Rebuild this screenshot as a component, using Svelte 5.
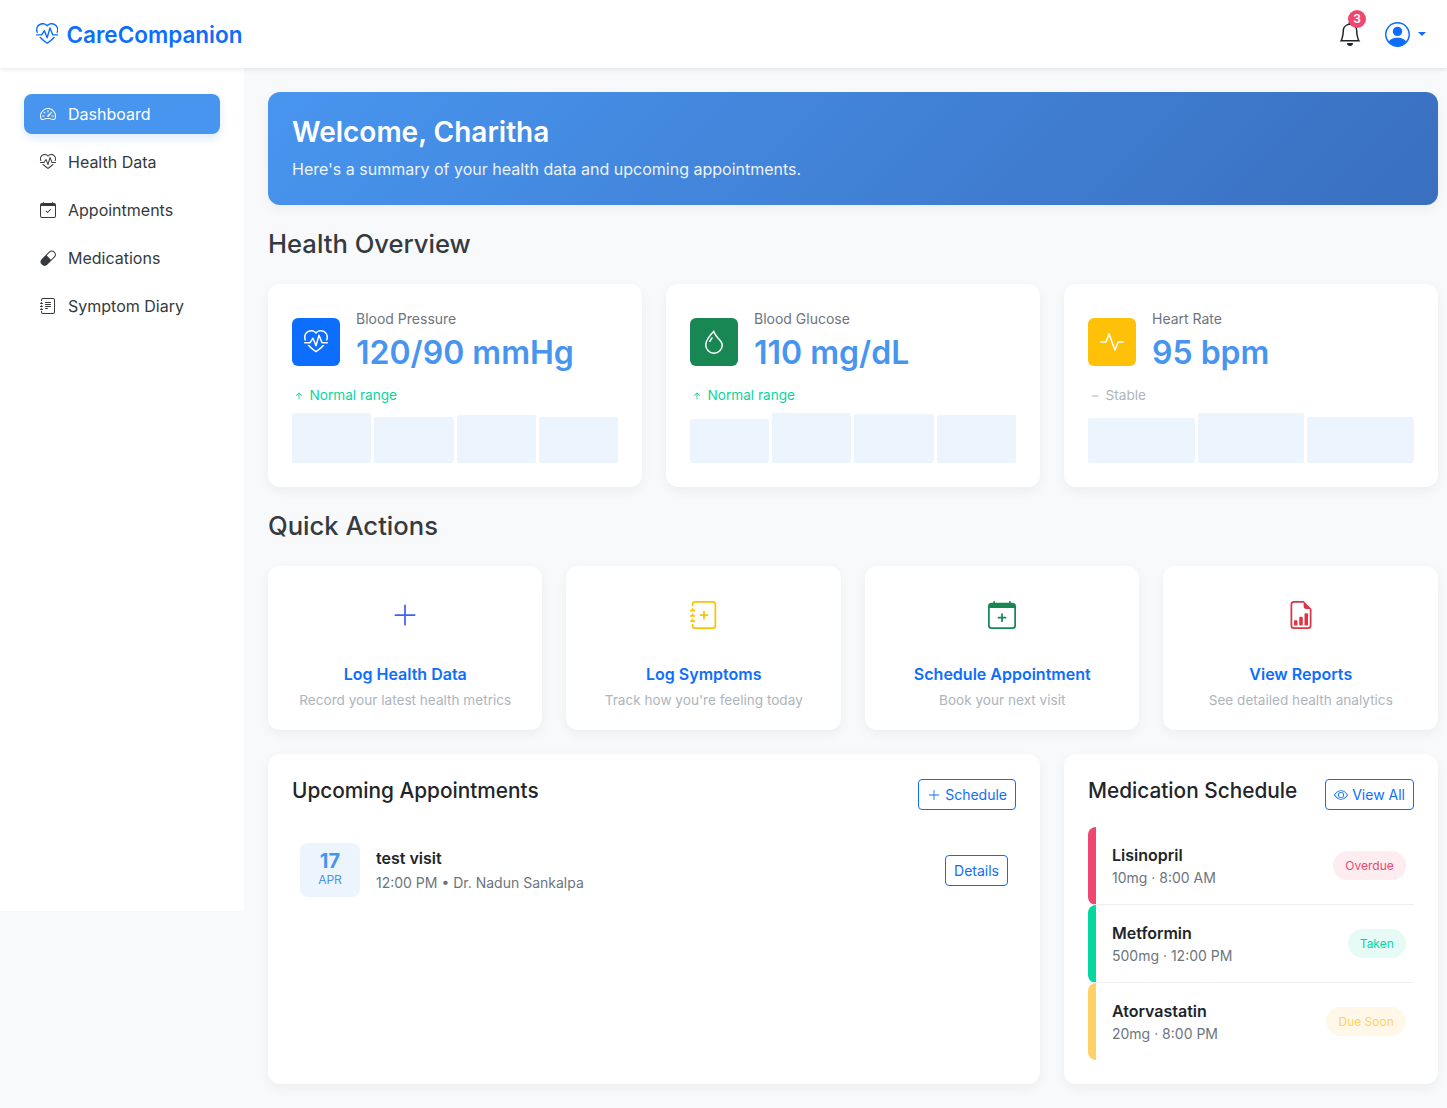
<script>
  const journalRings = "M3 0h10a2 2 0 0 1 2 2v12a2 2 0 0 1-2 2H3a2 2 0 0 1-2-2v-1h1v1a1 1 0 0 0 1 1h10a1 1 0 0 0 1-1V2a1 1 0 0 0-1-1H3a1 1 0 0 0-1 1v1H1V2a2 2 0 0 1 2-2M1 5v-.5a.5.5 0 0 1 1 0V5h.5a.5.5 0 0 1 0 1h-2a.5.5 0 0 1 0-1zm0 3v-.5a.5.5 0 0 1 1 0V8h.5a.5.5 0 0 1 0 1h-2a.5.5 0 0 1 0-1zm0 3v-.5a.5.5 0 0 1 1 0v.5h.5a.5.5 0 0 1 0 1h-2a.5.5 0 0 1 0-1z";
  const calendar = "M3.5 0a.5.5 0 0 1 .5.5V1h8V.5a.5.5 0 0 1 1 0V1h1a2 2 0 0 1 2 2v11a2 2 0 0 1-2 2H2a2 2 0 0 1-2-2V3a2 2 0 0 1 2-2h1V.5a.5.5 0 0 1 .5-.5M1 4v10a1 1 0 0 0 1 1h12a1 1 0 0 0 1-1V4z";

  const icons = {
    heartPulse: ["m8 2.748-.717-.737C5.6.281 2.514.878 1.4 3.053.918 3.995.78 5.323 1.508 7H.43c-2.128-5.697 4.165-8.83 7.394-5.857q.09.083.176.171a3 3 0 0 1 .176-.17c3.23-2.974 9.522.159 7.394 5.856h-1.078c.728-1.677.59-3.005.108-3.947C13.486.878 10.4.28 8.717 2.01zM2.212 10h1.315C4.593 11.183 6.05 12.458 8 13.795c1.949-1.337 3.407-2.612 4.473-3.795h1.315c-1.265 1.566-3.14 3.25-5.788 5-2.648-1.75-4.523-3.434-5.788-5", "M10.464 3.314a.5.5 0 0 0-.945.049L7.921 8.956 6.464 5.314a.5.5 0 0 0-.88-.091L3.732 8H.5a.5.5 0 0 0 0 1H4a.5.5 0 0 0 .416-.223l1.473-2.209 1.647 4.118a.5.5 0 0 0 .945-.049l1.598-5.593 1.457 3.642A.5.5 0 0 0 12 9h3.5a.5.5 0 0 0 0-1h-3.162z"],
    speedometer: ["M8 4a.5.5 0 0 1 .5.5V6a.5.5 0 0 1-1 0V4.5A.5.5 0 0 1 8 4M3.732 5.732a.5.5 0 0 1 .707 0l.915.914a.5.5 0 1 1-.708.708l-.914-.915a.5.5 0 0 1 0-.707M2 10a.5.5 0 0 1 .5-.5h1.586a.5.5 0 0 1 0 1H2.5A.5.5 0 0 1 2 10m9.5 0a.5.5 0 0 1 .5-.5h1.5a.5.5 0 0 1 0 1H12a.5.5 0 0 1-.5-.5m.754-4.246a.39.39 0 0 0-.527-.02L7.547 9.31a.91.91 0 1 0 1.302 1.258l3.434-4.297a.39.39 0 0 0-.029-.518z", "M0 10a8 8 0 1 1 15.547 2.661c-.442 1.253-1.845 1.602-2.932 1.25C11.309 13.488 9.475 13 8 13c-1.474 0-3.31.488-4.615.911-1.087.352-2.49.003-2.932-1.25A8 8 0 0 1 0 10m8-7a7 7 0 0 0-6.603 9.329c.203.575.923.876 1.68.63C4.397 12.533 6.358 12 8 12s3.604.532 4.923.96c.757.245 1.477-.056 1.68-.631A7 7 0 0 0 8 3"],
    calendarCheck: ["M10.854 7.146a.5.5 0 0 1 0 .708l-3 3a.5.5 0 0 1-.708 0l-1.5-1.5a.5.5 0 1 1 .708-.708L7.5 9.793l2.646-2.647a.5.5 0 0 1 .708 0", calendar],
    capsule: ["M1.828 8.9 8.9 1.827a4 4 0 1 1 5.657 5.657l-7.07 7.071A4 4 0 1 1 1.827 8.9Zm9.128.771 2.893-2.893a3 3 0 1 0-4.243-4.242L6.713 5.429z"],
    journalText: ["M5 10.5a.5.5 0 0 1 .5-.5h2a.5.5 0 0 1 0 1h-2a.5.5 0 0 1-.5-.5m0-2a.5.5 0 0 1 .5-.5h5a.5.5 0 0 1 0 1h-5a.5.5 0 0 1-.5-.5m0-2a.5.5 0 0 1 .5-.5h5a.5.5 0 0 1 0 1h-5a.5.5 0 0 1-.5-.5m0-2a.5.5 0 0 1 .5-.5h5a.5.5 0 0 1 0 1h-5a.5.5 0 0 1-.5-.5", journalRings],
    journalPlus: ["M8 5.5a.5.5 0 0 1 .5.5v1.5H10a.5.5 0 0 1 0 1H8.5V10a.5.5 0 0 1-1 0V8.5H6a.5.5 0 0 1 0-1h1.5V6a.5.5 0 0 1 .5-.5", journalRings],
    calendarPlus: ["M8 7a.5.5 0 0 1 .5.5V9H10a.5.5 0 0 1 0 1H8.5v1.5a.5.5 0 0 1-1 0V10H6a.5.5 0 0 1 0-1h1.5V7.5A.5.5 0 0 1 8 7", calendar],
    fileGraph: ["M10 13.5a.5.5 0 0 0 .5.5h1a.5.5 0 0 0 .5-.5v-6a.5.5 0 0 0-.5-.5h-1a.5.5 0 0 0-.5.5zm-2.5.5a.5.5 0 0 1-.5-.5v-4a.5.5 0 0 1 .5-.5h1a.5.5 0 0 1 .5.5v4a.5.5 0 0 1-.5.5zm-3 0a.5.5 0 0 1-.5-.5v-2a.5.5 0 0 1 .5-.5h1a.5.5 0 0 1 .5.5v2a.5.5 0 0 1-.5.5z", "M14 14V4.5L9.5 0H4a2 2 0 0 0-2 2v12a2 2 0 0 0 2 2h8a2 2 0 0 0 2-2M9.5 3A1.5 1.5 0 0 0 11 4.5h2V14a1 1 0 0 1-1 1H4a1 1 0 0 1-1-1V2a1 1 0 0 1 1-1h5.5z"],
    bell: ["M8 16a2 2 0 0 0 2-2H6a2 2 0 0 0 2 2M8 1.918l-.797.161A4 4 0 0 0 4 6c0 .628-.134 2.197-.459 3.742-.16.767-.376 1.566-.663 2.258h10.244c-.287-.692-.502-1.49-.663-2.258C12.134 8.197 12 6.628 12 6a4 4 0 0 0-3.203-3.92zM14.22 12c.223.447.481.801.78 1H1c.299-.199.557-.553.78-1C2.68 10.2 3 6.88 3 6c0-2.42 1.72-4.44 4.005-4.901a1 1 0 1 1 1.99 0A5 5 0 0 1 13 6c0 .88.32 4.2 1.22 6"],
    person: ["M11 6a3 3 0 1 1-6 0 3 3 0 0 1 6 0", "M0 8a8 8 0 1 1 16 0A8 8 0 0 1 0 8m8-7a7 7 0 0 0-5.468 11.37C3.242 11.226 4.805 10 8 10s4.757 1.225 5.468 2.37A7 7 0 0 0 8 1"],
    droplet: ["M7.21.8C7.69.295 8 0 8 0q.164.544.371 1.038c.812 1.946 2.073 3.35 3.197 4.6C12.878 7.096 14 8.345 14 10a6 6 0 0 1-12 0C2 6.668 5.58 2.517 7.21.8m.413 1.021A31 31 0 0 0 5.794 3.99c-.726.95-1.436 2.008-1.96 3.07C3.304 8.133 3 9.138 3 10a5 5 0 0 0 10 0c0-1.201-.796-2.157-2.181-3.7l-.03-.032C9.75 5.11 8.5 3.72 7.623 1.82z", "M4.553 7.776c.82-1.641 1.717-2.753 2.093-3.13l.708.708c-.29.29-1.128 1.311-1.907 2.87z"],
    activity: ["M6 2a.5.5 0 0 1 .47.33L10 12.036l1.53-4.208A.5.5 0 0 1 12 7.5h3.5a.5.5 0 0 1 0 1h-3.15l-1.88 5.17a.5.5 0 0 1-.94 0L6 3.964 4.47 8.171A.5.5 0 0 1 4 8.5H.5a.5.5 0 0 1 0-1h3.15l1.88-5.17A.5.5 0 0 1 6 2"],
    eye: ["M16 8s-3-5.5-8-5.5S0 8 0 8s3 5.5 8 5.5S16 8 16 8M1.173 8a13 13 0 0 1 1.66-2.043C4.12 4.668 5.88 3.5 8 3.5s3.879 1.168 5.168 2.457A13 13 0 0 1 14.828 8q-.086.13-.195.288c-.335.48-.83 1.12-1.465 1.755C11.879 11.332 10.119 12.5 8 12.5s-3.879-1.168-5.168-2.457A13 13 0 0 1 1.172 8z", "M8 5.5a2.5 2.5 0 1 0 0 5 2.5 2.5 0 0 0 0-5M4.5 8a3.5 3.5 0 1 1 7 0 3.5 3.5 0 0 1-7 0"],
    plusLg: ["M8 2a.5.5 0 0 1 .5.5v5h5a.5.5 0 0 1 0 1h-5v5a.5.5 0 0 1-1 0v-5h-5a.5.5 0 0 1 0-1h5v-5A.5.5 0 0 1 8 2"],
    arrowUp: ["M8 12a.5.5 0 0 0 .5-.5V5.707l2.146 2.147a.5.5 0 0 0 .708-.708l-3-3a.5.5 0 0 0-.708 0l-3 3a.5.5 0 1 0 .708.708L7.5 5.707V11.500a.5.5 0 0 0 .5.5"],
    dash: ["M4 8a.5.5 0 0 1 .5-.5h7a.5.5 0 0 1 0 1h-7A.5.5 0 0 1 4 8"]
  };

  const nav = [
    { label: "Dashboard", icon: "speedometer", active: true },
    { label: "Health Data", icon: "heartPulse" },
    { label: "Appointments", icon: "calendarCheck" },
    { label: "Medications", icon: "capsule" },
    { label: "Symptom Diary", icon: "journalText" }
  ];

  const stats = [
    { label: "Blood Pressure", value: "120/90 mmHg", icon: "heartPulse", tone: "blue", trend: "Normal range", trendIcon: "arrowUp", good: true, bars: [50, 46, 48, 46] },
    { label: "Blood Glucose", value: "110 mg/dL", icon: "droplet", tone: "green", trend: "Normal range", trendIcon: "arrowUp", good: true, bars: [44, 50, 49, 48] },
    { label: "Heart Rate", value: "95 bpm", icon: "activity", tone: "yellow", trend: "Stable", trendIcon: "dash", good: false, bars: [45, 50, 46] }
  ];

  const actions = [
    { title: "Log Health Data", text: "Record your latest health metrics", icon: "plusLg", tone: "a-blue" },
    { title: "Log Symptoms", text: "Track how you're feeling today", icon: "journalPlus", tone: "a-yellow" },
    { title: "Schedule Appointment", text: "Book your next visit", icon: "calendarPlus", tone: "a-green" },
    { title: "View Reports", text: "See detailed health analytics", icon: "fileGraph", tone: "a-red" }
  ];

  const meds = [
    { name: "Lisinopril", dose: "10mg · 8:00 AM", status: "Overdue", kind: "overdue" },
    { name: "Metformin", dose: "500mg · 12:00 PM", status: "Taken", kind: "taken" },
    { name: "Atorvastatin", dose: "20mg · 8:00 PM", status: "Due Soon", kind: "soon" }
  ];
</script>

{#snippet icon(name, size)}
  <svg class="bi" width={size} height={size} viewBox="0 0 16 16" fill="currentColor" aria-hidden="true">
    {#each icons[name] as d}
      <path {d} />
    {/each}
  </svg>
{/snippet}

<header class="navbar">
  <a class="brand" href="#top">
    {@render icon("heartPulse", 22.4)}
    <span>CareCompanion</span>
  </a>
  <div class="nav-right">
    <button class="bell">
      {@render icon("bell", 24)}
      <span class="count">3</span>
    </button>
    <button class="user">
      {@render icon("person", 25)}
      <span class="caret"></span>
    </button>
  </div>
</header>

<div class="layout">
  <aside class="sidebar">
    {#each nav as item}
      <a class="nav-link" class:active={item.active} href="#top">
        {@render icon(item.icon, 16)}
        <span>{item.label}</span>
      </a>
    {/each}
  </aside>

  <main class="main">
    <section class="welcome">
      <h2>Welcome, Charitha</h2>
      <p>Here's a summary of your health data and upcoming appointments.</p>
    </section>

    <h3 class="section-title">Health Overview</h3>
    <div class="stats">
      {#each stats as s}
        <div class="card stat">
          <div class="stat-head">
            <div class="stat-icon {s.tone}">{@render icon(s.icon, 24)}</div>
            <div>
              <div class="stat-label">{s.label}</div>
              <div class="stat-value">{s.value}</div>
            </div>
          </div>
          <div class="trend" class:good={s.good}>
            {@render icon(s.trendIcon, 14)}
            <span>{s.trend}</span>
          </div>
          <div class="chart">
            {#each s.bars as h}
              <div class="bar" style="height: {h}px"></div>
            {/each}
          </div>
        </div>
      {/each}
    </div>

    <h3 class="section-title">Quick Actions</h3>
    <div class="actions">
      {#each actions as a}
        <div class="card action">
          <div class="action-icon {a.tone}">{@render icon(a.icon, 28)}</div>
          <h5>{a.title}</h5>
          <p>{a.text}</p>
        </div>
      {/each}
    </div>

    <div class="bottom">
      <div class="card panel wide">
        <div class="panel-head">
          <h4>Upcoming Appointments</h4>
          <button class="btn">{@render icon("plusLg", 14)}<span>Schedule</span></button>
        </div>
        <div class="appt">
          <div class="date">
            <div class="day">17</div>
            <div class="month">APR</div>
          </div>
          <div class="appt-info">
            <div class="appt-title">test visit</div>
            <div class="appt-sub">12:00 PM • Dr. Nadun Sankalpa</div>
          </div>
          <button class="btn">Details</button>
        </div>
      </div>

      <div class="card panel">
        <div class="panel-head meds-head">
          <h4>Medication Schedule</h4>
          <button class="btn">{@render icon("eye", 14)}<span>View All</span></button>
        </div>
        {#each meds as m}
          <div class="med {m.kind}">
            <div>
              <div class="med-name">{m.name}</div>
              <div class="med-dose">{m.dose}</div>
            </div>
            <span class="pill">{m.status}</span>
          </div>
        {/each}
      </div>
    </div>
  </main>
</div>

<style>
  :global(body) {
    font-family: Inter, "Liberation Sans", sans-serif;
    background: #f8f9fa;
    color: #212529;
  }

  .bi { display: block; flex-shrink: 0; }
  button { font-family: inherit; background: none; border: none; padding: 0; cursor: pointer; }

  /* top bar */
  .navbar {
    position: relative;
    z-index: 2;
    height: 68px;
    box-sizing: border-box;
    display: flex;
    align-items: center;
    justify-content: space-between;
    padding: 0 21px 0 36px;
    background: #fff;
    box-shadow: 0 2px 4px rgba(0, 0, 0, 0.08);
  }
  .brand {
    display: flex;
    align-items: center;
    gap: 8px;
    color: #0d6efd;
    font-size: 22.5px;
    font-weight: 600;
    text-decoration: none;
  }
  .nav-right { display: flex; align-items: center; gap: 23px; }
  .bell { position: relative; color: #212529; }
  .count {
    position: absolute;
    top: -12px;
    left: 10px;
    width: 18px;
    height: 18px;
    border-radius: 50%;
    background: #ef476f;
    color: #fff;
    font-size: 12px;
    font-weight: 600;
    line-height: 18px;
    text-align: center;
  }
  .user { display: flex; align-items: center; gap: 8px; color: #0d6efd; }
  .caret {
    border-top: 4px solid #0d6efd;
    border-left: 4px solid transparent;
    border-right: 4px solid transparent;
  }

  .layout { display: flex; align-items: flex-start; }

  /* sidebar */
  .sidebar {
    width: 244px;
    height: 843px;
    flex-shrink: 0;
    box-sizing: border-box;
    padding: 26px 24px 0;
    background: #fff;
    display: flex;
    flex-direction: column;
    gap: 8px;
  }
  .nav-link {
    display: flex;
    align-items: center;
    gap: 12px;
    padding: 8px 16px;
    border-radius: 8px;
    color: #343a40;
    font-size: 16px;
    line-height: 24px;
    text-decoration: none;
  }
  .nav-link.active {
    background: #4895ef;
    color: #fff;
    box-shadow: 0 4px 10px rgba(72, 149, 239, 0.2);
  }

  /* main column */
  .main { flex: 1; min-width: 0; padding: 24px 9.02px 24px 24px; }

  .welcome {
    height: 113px;
    box-sizing: border-box;
    padding: 24px;
    border-radius: 12px;
    color: #fff;
    background: linear-gradient(135deg, #4895ef, #3a6fbf);
    box-shadow: 0 4px 12px rgba(0, 0, 0, 0.05);
  }
  .welcome h2 { margin: 0 0 8px; font-size: 28px; line-height: 33px; font-weight: 600; }
  .welcome p { margin: 0; font-size: 16px; line-height: 24px; opacity: 0.9; }

  .section-title {
    margin: 24px 0 25px;
    font-size: 25.6px;
    line-height: 30px;
    font-weight: 500;
    color: #343a40;
  }

  .card {
    background: #fff;
    border-radius: 12px;
    box-shadow: 0 4px 12px rgba(0, 0, 0, 0.05);
    box-sizing: border-box;
  }

  .stats { display: grid; grid-template-columns: repeat(3, 1fr); gap: 24px; }
  .stat { padding: 24px; height: 203px; }
  .stat-head { display: flex; align-items: center; gap: 16px; height: 68px; }
  .stat-icon {
    width: 48px;
    height: 48px;
    border-radius: 6px;
    display: flex;
    align-items: center;
    justify-content: center;
    color: #fff;
  }
  .blue { background: #0d6efd; }
  .green { background: #198754; }
  .yellow { background: #ffc107; }
  .stat-label { font-size: 14px; line-height: 21px; color: #6c757d; margin-bottom: 2px; }
  .stat-value { font-size: 32px; line-height: 43px; margin-bottom: 2px; font-weight: 600; color: #4895ef; }
  .trend {
    display: flex;
    align-items: center;
    gap: 3.6px;
    margin-top: 9px;
    font-size: 13.6px;
    line-height: 21px;
    color: #adb5bd;
  }
  .trend.good { color: #06d6a0; }
  .chart { display: flex; align-items: flex-end; gap: 3px; height: 50px; margin-top: 7px; }
  .bar { flex: 1; background: rgba(72, 149, 239, 0.1); border-radius: 2px; }

  .actions { display: grid; grid-template-columns: repeat(4, 1fr); gap: 24px; }
  .action { height: 164px; padding: 24px 16px 0; text-align: center; }
  .action-icon { height: 50px; display: flex; align-items: center; justify-content: center; margin-bottom: 22px; }
  .a-blue { color: #4361ee; }
  .a-yellow { color: #ffc107; }
  .a-green { color: #198754; }
  .a-red { color: #dc3545; }
  .action h5 { margin: 0 0 4px; font-size: 16px; line-height: 24px; font-weight: 600; color: #0d6efd; }
  .action p { margin: 0; font-size: 13.6px; line-height: 20px; color: #adb5bd; }

  .bottom { display: grid; grid-template-columns: repeat(3, 1fr); gap: 24px; margin-top: 24px; }
  .wide { grid-column: span 2; }
  .panel { padding: 24px; min-height: 330px; }
  .panel-head {
    display: flex;
    align-items: flex-start;
    justify-content: space-between;
    height: 33px;
    margin-bottom: 24px;
  }
  .meds-head { margin-bottom: 16px; }
  .panel h4 { margin: 0; font-size: 20.8px; line-height: 25px; font-weight: 500; color: #212529; }
  .panel-head .btn { margin-top: 1px; }
  .btn {
    display: flex;
    align-items: center;
    gap: 4.5px;
    padding: 4px 8px;
    border: 1px solid #0d6efd;
    border-radius: 4px;
    color: #0d6efd;
    font-size: 14px;
    line-height: 21px;
  }

  .appt { display: flex; align-items: center; gap: 16px; padding: 8px; }
  .date {
    width: 60px;
    height: 54px;
    box-sizing: border-box;
    padding-top: 6px;
    border-radius: 8px;
    background: rgba(72, 149, 239, 0.1);
    color: #4895ef;
    text-align: center;
  }
  .day { font-size: 20px; line-height: 24px; font-weight: 700; }
  .month { font-size: 12px; line-height: 14px; }
  .appt-info { flex: 1; margin-bottom: 2px; }
  .appt-title { font-size: 16px; line-height: 24px; font-weight: 600; color: #212529; margin-bottom: 2px; }
  .appt-sub { font-size: 14px; line-height: 21px; color: #6c757d; }

  .med {
    display: flex;
    align-items: center;
    justify-content: space-between;
    padding: 16px 8px 16px 16px;
    border-left: 8px solid;
    border-bottom: 1px solid #eee;
    border-radius: 8px 0 0 8px;
  }
  .med:last-child { border-bottom: none; }
  .med.overdue { border-left-color: #ef476f; }
  .med.taken { border-left-color: #06d6a0; }
  .med.soon { border-left-color: #ffd166; }
  .med-name { font-size: 16px; line-height: 24px; font-weight: 600; color: #212529; }
  .med-dose { font-size: 14px; line-height: 21px; color: #6c757d; }
  .pill { padding: 6px 12.2px; border-radius: 50px; font-size: 12px; line-height: 17px; }
  .overdue .pill { background: rgba(239, 71, 111, 0.1); color: #ef476f; }
  .taken .pill { background: rgba(6, 214, 160, 0.1); color: #06d6a0; }
  .soon .pill { background: rgba(255, 209, 102, 0.15); color: #ffd166; }
</style>
